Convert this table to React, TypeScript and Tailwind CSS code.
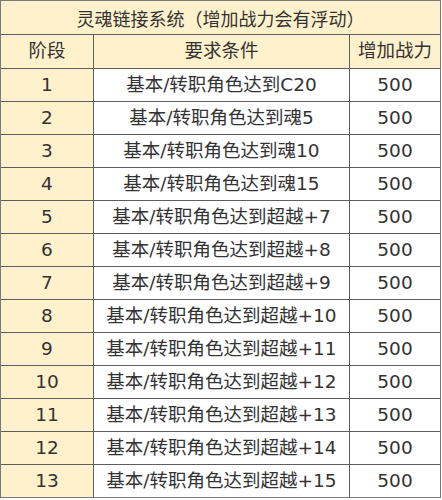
import React from "react";

const rows: [string, string][] = [
  ["1", "基本/转职角色达到C20"],
  ["2", "基本/转职角色达到魂5"],
  ["3", "基本/转职角色达到魂10"],
  ["4", "基本/转职角色达到魂15"],
  ["5", "基本/转职角色达到超越+7"],
  ["6", "基本/转职角色达到超越+8"],
  ["7", "基本/转职角色达到超越+9"],
  ["8", "基本/转职角色达到超越+10"],
  ["9", "基本/转职角色达到超越+11"],
  ["10", "基本/转职角色达到超越+12"],
  ["11", "基本/转职角色达到超越+13"],
  ["12", "基本/转职角色达到超越+14"],
  ["13", "基本/转职角色达到超越+15"],
];

export default function App() {
  return (
    <div className="w-[442px] h-[500px] bg-white">
      <div
        className="w-[441px] grid grid-cols-[92px_255px_90px] grid-rows-[33px_33px_repeat(13,32px)] gap-px bg-[#5e5e5e] border border-[#7a7a7a] text-[18.5px] text-[#333333] leading-none"
        style={{ fontFamily: '"DejaVu Sans", "Noto Sans CJK SC", sans-serif' }}
      >
        <div className="col-span-3 bg-[#fef1cc] flex items-center justify-center text-[18px] [font-family:'Noto_Sans_CJK_SC',sans-serif]">
          灵魂链接系统（增加战力会有浮动）
        </div>
        <div className="bg-[#fef1cc] flex items-center justify-center">阶段</div>
        <div className="bg-[#fef1cc] flex items-center justify-center">要求条件</div>
        <div className="bg-[#fef1cc] flex items-center justify-center">增加战力</div>
        {rows.map(([n, t]) => (
          <React.Fragment key={n}>
            <div className="bg-[#fef1cc] flex items-center justify-center">{n}</div>
            <div className="bg-white flex items-center justify-center">{t}</div>
            <div className="bg-white flex items-center justify-center">500</div>
          </React.Fragment>
        ))}
      </div>
    </div>
  );
}
